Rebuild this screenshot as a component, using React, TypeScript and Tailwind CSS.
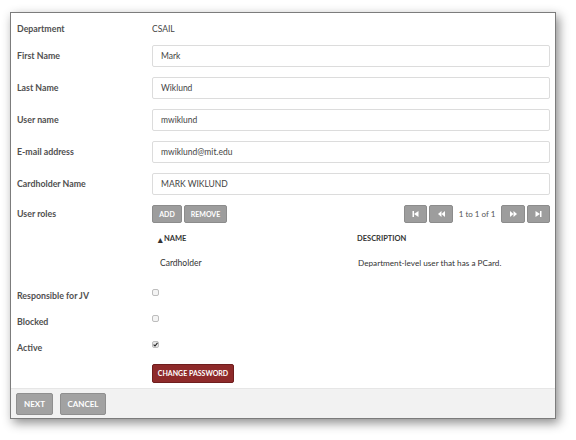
import React from "react";

const font = { fontFamily: "Lato, 'Open Sans', sans-serif" };

function Label({ children }: { children: React.ReactNode }) {
  return (
    <div className="w-[135px] shrink-0 text-[8.8px] font-bold text-[#505050]">{children}</div>
  );
}

function InputRow({ label, value }: { label: string; value: string }) {
  return (
    <div className="flex items-center h-[22px] mt-[10px]">
      <Label>{label}</Label>
      <div className="flex-1 h-[22px] border border-[#dcdcdc] rounded-[2px] bg-white flex items-center pl-[8px] text-[8.5px] text-[#444]">
        {value}
      </div>
    </div>
  );
}

function GrayBtn({ children, className = "" }: { children: React.ReactNode; className?: string }) {
  return (
    <div
      className={
        "h-[18px] bg-[#9d9d9d] border border-[#8c8c8c] rounded-[2px] flex items-center justify-center text-white text-[7px] font-bold " +
        className
      }
    >
      {children}
    </div>
  );
}

function PageIcon({ kind }: { kind: "first" | "prev" | "next" | "last" }) {
  return (
    <svg width="7" height="6" viewBox="0 0 7 6" fill="white">
      {kind === "first" && (
        <>
          <rect x="0.5" y="0" width="1.5" height="6" />
          <polygon points="6.5,0 6.5,6 2,3" />
        </>
      )}
      {kind === "prev" && (
        <>
          <polygon points="3.5,0 3.5,6 0,3" />
          <polygon points="7,0 7,6 3.5,3" />
        </>
      )}
      {kind === "next" && (
        <>
          <polygon points="0,0 0,6 3.5,3" />
          <polygon points="3.5,0 3.5,6 7,3" />
        </>
      )}
      {kind === "last" && (
        <>
          <polygon points="0.5,0 0.5,6 5,3" />
          <rect x="5" y="0" width="1.5" height="6" />
        </>
      )}
    </svg>
  );
}

function Check({ checked = false }: { checked?: boolean }) {
  return (
    <div
      className={
        "w-[7px] h-[7px] mt-[3px] rounded-[2px] border border-[#bdbdbd] flex items-center justify-center " +
        (checked ? "bg-[#e6e6e6]" : "bg-[#f4f4f4]")
      }
    >
      {checked && (
        <svg width="5" height="5" viewBox="0 0 5 5">
          <path d="M0.6 2.6 L2 4 L4.5 0.8" stroke="#222" strokeWidth="1.1" fill="none" />
        </svg>
      )}
    </div>
  );
}

function CheckRow({ label, checked, first }: { label: string; checked?: boolean; first?: boolean }) {
  return (
    <div className={"flex h-[20px] " + (first ? "mt-[12px]" : "mt-[6px]")}>
      <div className="w-[135px] shrink-0 flex items-center text-[8.8px] font-bold text-[#505050]">{label}</div>
      <div className="flex items-start">
        <Check checked={checked} />
      </div>
    </div>
  );
}

export default function App() {
  return (
    <div className="w-[576px] h-[440px] bg-white pt-[12px] pl-[10px]" style={font}>
      <div className="w-[546px] h-[407px] border border-[#7c7c7c] bg-white shadow-[3px_4px_10px_rgba(0,0,0,0.45)] flex flex-col">
        <div className="flex-1 pl-[6px] pr-[5px] pt-[5px]">
          <div className="flex items-center h-[22px]">
            <Label>Department</Label>
            <div className="text-[8.5px] text-[#444]">CSAIL</div>
          </div>
          <div className="mt-[-5px]" />
          <InputRow label="First Name" value="Mark" />
          <InputRow label="Last Name" value="Wiklund" />
          <InputRow label="User name" value="mwiklund" />
          <InputRow label="E-mail address" value="mwiklund@mit.edu" />
          <InputRow label="Cardholder Name" value="MARK WIKLUND" />

          <div className="flex items-center h-[18px] mt-[10px]">
            <Label>User roles</Label>
            <div className="flex-1 flex items-center">
              <GrayBtn className="w-[30px]">ADD</GrayBtn>
              <GrayBtn className="w-[43px] ml-[2px]">REMOVE</GrayBtn>
              <div className="flex-1" />
              <GrayBtn className="w-[23px]">
                <PageIcon kind="first" />
              </GrayBtn>
              <GrayBtn className="w-[24px] ml-[2px]">
                <PageIcon kind="prev" />
              </GrayBtn>
              <div className="w-[48px] text-center text-[8px] text-[#555]">1 to 1 of 1</div>
              <GrayBtn className="w-[24px]">
                <PageIcon kind="next" />
              </GrayBtn>
              <GrayBtn className="w-[23px] ml-[2px]">
                <PageIcon kind="last" />
              </GrayBtn>
            </div>
          </div>

          <div className="flex h-[22px] mt-[5px] items-center">
            <div className="w-[135px] shrink-0" />
            <div className="w-[198px] pl-[6px] text-[7.5px] font-bold text-[#333] flex items-center">
              <span className="text-[9px] leading-none mr-[1px]">▴</span>NAME
            </div>
            <div className="pl-[7px] text-[7.5px] font-bold text-[#333]">DESCRIPTION</div>
          </div>
          <div className="flex h-[22px] mt-[2px] items-center">
            <div className="w-[135px] shrink-0" />
            <div className="w-[198px] pl-[8px] text-[8.5px] text-[#333]">Cardholder</div>
            <div className="pl-[8px] text-[8.2px] text-[#333]">Department-level user that has a PCard.</div>
          </div>

          <CheckRow label="Responsible for JV" first />
          <CheckRow label="Blocked" />
          <CheckRow label="Active" checked />

          <div className="flex mt-[6px]">
            <div className="w-[135px] shrink-0" />
            <div className="w-[82px] h-[19px] bg-[#8e2a2a] border border-[#6f1d1d] rounded-[2px] flex items-center justify-center text-white text-[7px] font-bold">
              CHANGE PASSWORD
            </div>
          </div>
        </div>

        <div className="h-[30px] bg-[#f2f2f2] border-t border-[#e6e6e6] flex items-center pl-[5px] gap-[7px]">
          <div className="w-[37px] h-[22px] bg-[#a2a2a2] border border-[#8f8f8f] rounded-[2px] flex items-center justify-center text-white text-[8px] font-bold">
            NEXT
          </div>
          <div className="w-[46px] h-[22px] bg-[#a2a2a2] border border-[#8f8f8f] rounded-[2px] flex items-center justify-center text-white text-[8px] font-bold">
            CANCEL
          </div>
        </div>
      </div>
    </div>
  );
}
